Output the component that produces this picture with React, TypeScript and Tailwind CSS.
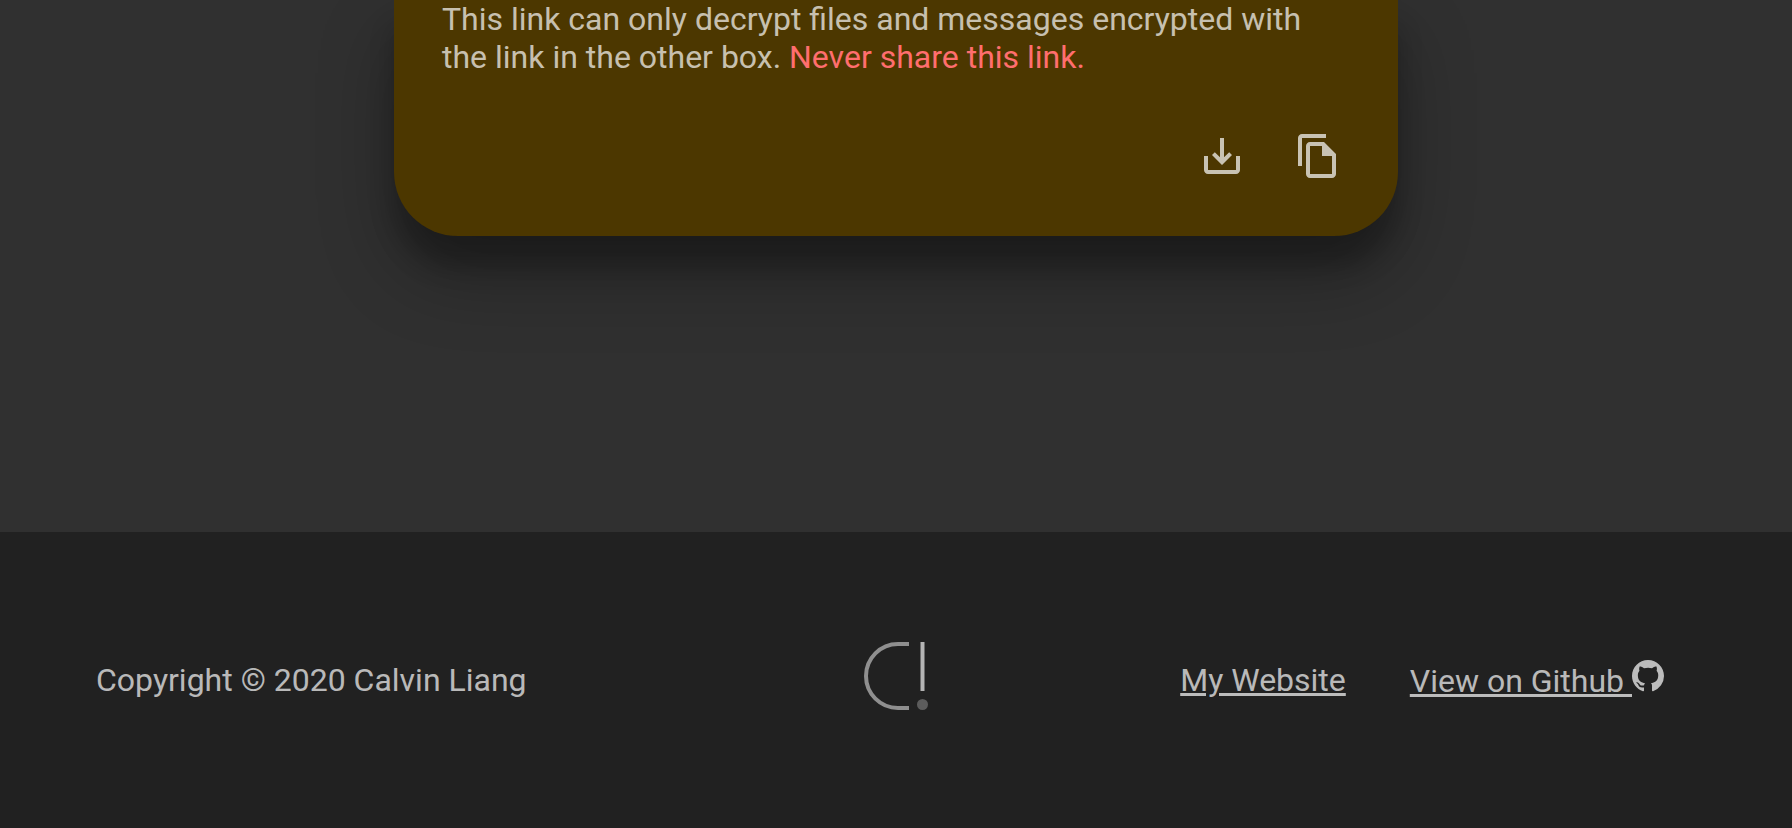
function SaveIcon() {
  return (
    <svg viewBox="0 0 24 24" className="size-12 fill-current" aria-hidden="true">
      <path d="M19 12v7H5v-7H3v7c0 1.1.9 2 2 2h14c1.1 0 2-.9 2-2v-7h-2zm-6 .67l2.59-2.58L17 11.5l-5 5-5-5 1.41-1.41L11 12.67V3h2v9.67z" />
    </svg>
  );
}

function CopyIcon() {
  return (
    <svg viewBox="0 0 24 24" className="size-12 fill-current" aria-hidden="true">
      <path d="M16 1H4c-1.1 0-2 .9-2 2v14h2V3h12V1zm-1 4H8c-1.1 0-1.99.9-1.99 2L6 21c0 1.1.89 2 1.99 2H19c1.1 0 2-.9 2-2V11l-6-6zM8 21V7h6v5h5v9H8z" />
    </svg>
  );
}

function GithubIcon() {
  return (
    <svg viewBox="0 0 16 16" className="inline-block size-8 fill-current align-baseline" aria-hidden="true">
      <path
        fillRule="evenodd"
        d="M8 0C3.58 0 0 3.58 0 8c0 3.54 2.29 6.53 5.47 7.59.4.07.55-.17.55-.38 0-.19-.01-.82-.01-1.49-2.01.37-2.53-.49-2.69-.94-.09-.23-.48-.94-.82-1.13-.28-.15-.68-.52-.01-.53.63-.01 1.08.58 1.23.82.72 1.21 1.87.87 2.33.66.07-.52.28-.87.51-1.07-1.78-.2-3.64-.89-3.64-3.95 0-.87.31-1.59.82-2.15-.08-.2-.36-1.02.08-2.12 0 0 .67-.21 2.2.82.64-.18 1.32-.27 2-.27.68 0 1.36.09 2 .27 1.53-1.04 2.2-.82 2.2-.82.44 1.1.16 1.92.08 2.12.51.56.82 1.27.82 2.15 0 3.07-1.87 3.75-3.65 3.95.29.25.54.73.54 1.48 0 1.07-.01 1.93-.01 2.2 0 .21.15.46.55.38A8.013 8.013 0 0016 8c0-4.42-3.58-8-8-8z"
      />
    </svg>
  );
}

function Logo() {
  return (
    <svg viewBox="0 0 64 68" className="h-[68px] w-16" role="img" aria-label="Calvin Liang">
      <path d="M45 2H34a32 32 0 0 0 0 64h11" fill="none" stroke="#8f8f8f" strokeWidth="4" />
      <path d="M58.5 0v49" fill="none" stroke="#b4b4b4" strokeWidth="4" />
      <circle cx="58.5" cy="62.5" r="5.5" fill="#5c5c5c" />
    </svg>
  );
}

export default function App() {
  return (
    <div className="flex min-h-screen flex-col bg-[#303030] font-[Roboto,sans-serif] text-[32px] leading-[38px] text-white/70">
      <main className="flex flex-1 flex-col px-8 pb-[296px]">
        <section className="mx-auto w-full max-w-[1004px] rounded-b-[64px] bg-[#4c3700] pb-8 shadow-[0px_38px_76px_rgba(0,0,0,0.3),0px_30px_24px_rgba(0,0,0,0.22)]">
          <p className="px-12">
            This link can only decrypt files and messages encrypted with the link in the other box.{" "}
            <span className="text-[#ff6e6e]">Never share this link.</span>
          </p>
          <div className="mt-8 flex justify-end px-8">
            <button type="button" aria-label="Download link" className="rounded-full p-6">
              <SaveIcon />
            </button>
            <button type="button" aria-label="Copy link" className="rounded-full p-6">
              <CopyIcon />
            </button>
          </div>
        </section>
      </main>
      <footer className="grid min-h-[296px] grid-cols-3 items-center bg-[#212121] px-24">
        <p>Copyright © 2020 Calvin Liang</p>
        <div className="flex justify-center pb-2">
          <Logo />
        </div>
        <nav className="flex items-center justify-end gap-16 pr-8 whitespace-nowrap">
          <a href="#website" className="underline">My Website</a>
          <a href="#github" className="underline">View on Github <GithubIcon /></a>
        </nav>
      </footer>
    </div>
  );
}
